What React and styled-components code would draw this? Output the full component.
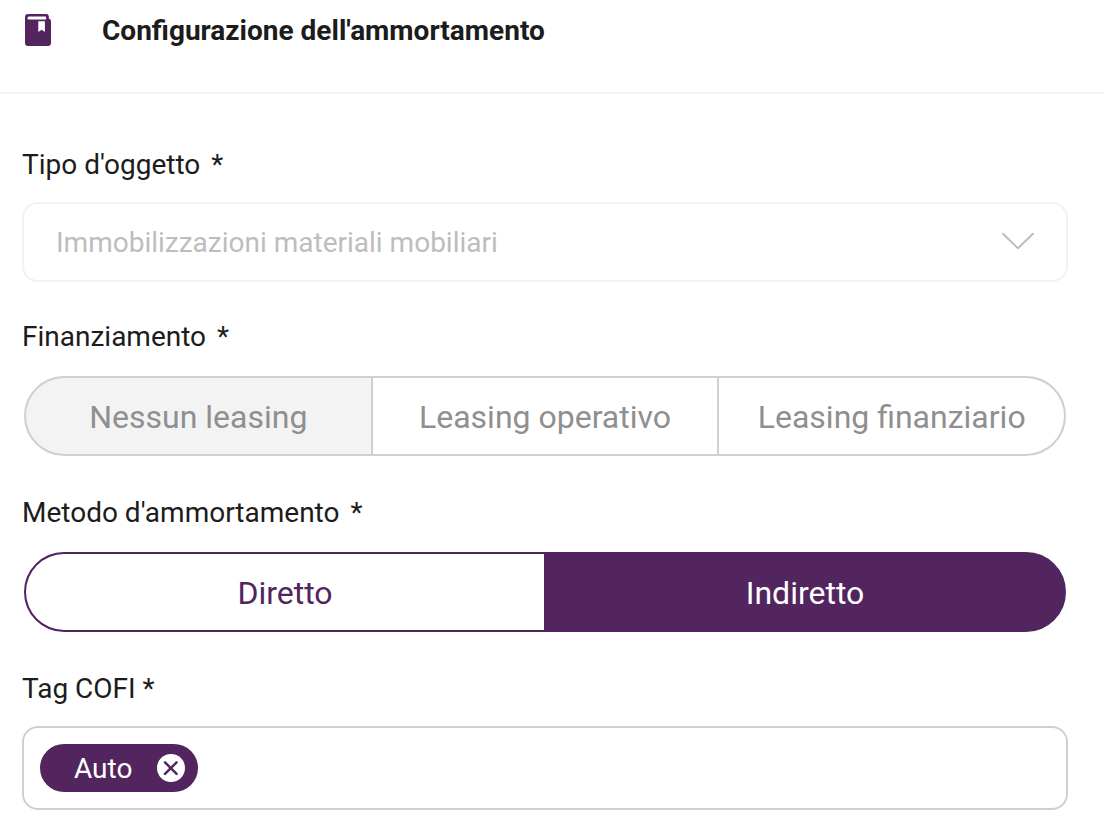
import React, { useState } from "react";
import styled, { createGlobalStyle } from "styled-components";

const color = {
  brand: "#52255f",
  text: "#1c1c1c",
  line: "#d0d0d0",
  faintLine: "#f2f2f2",
  muted: "#8f8f8f",
  disabled: "#bdbdbd",
  fill: "#f3f3f3",
};

const GlobalStyle = createGlobalStyle`
  *, *::before, *::after { box-sizing: border-box; }
  body {
    margin: 0;
    background: #fff;
    color: ${color.text};
    font: 400 28px/34px Roboto, "Liberation Sans", sans-serif;
  }
  button, input, select { font: inherit; }
`;

const Header = styled.header`
  display: flex;
  align-items: flex-start;
  gap: 50px;
  padding: 14px 24px 44px;
  border-bottom: 2px solid ${color.faintLine};
`;

const BookIcon = styled.svg`
  flex: none;
  width: 28px;
  height: 32px;
`;

const Title = styled.h1`
  margin: 0;
  font-size: 28px;
  line-height: 34px;
  font-weight: 700;
`;

const Form = styled.form`
  display: flex;
  flex-direction: column;
  gap: 38px;
  padding: 54px 36px 28px 22px;
`;

const Field = styled.div`
  display: flex;
  flex-direction: column;
  gap: 20px;
`;

const Label = styled.label`
  display: block;
`;

const Star = styled.span`
  margin-left: 4px;
`;

const SelectBox = styled.div`
  display: grid;
  align-items: center;
  > * { grid-area: 1 / 1; }
`;

const Select = styled.select`
  appearance: none;
  width: 100%;
  height: 80px;
  padding: 2px 80px 0 32px;
  border: 2px solid ${color.faintLine};
  border-radius: 16px;
  background: #fff;
  color: ${color.disabled};
  opacity: 1;
`;

const Chevron = styled.svg`
  justify-self: end;
  width: 34px;
  height: 20px;
  margin-right: 33px;
  pointer-events: none;
`;

const Segments = styled.div`
  display: flex;
  gap: 2px;
  height: 80px;
  margin: 2px;
  border: 2px solid ${(p) => (p.$disabled ? color.line : color.brand)};
  border-radius: 40px;
  background: ${(p) => (p.$disabled ? color.line : color.brand)};
  overflow: hidden;
`;

const Segment = styled.button`
  flex: 1 1 0;
  padding: 2px 0 0;
  border: 0;
  font-size: 32px;
  line-height: 40px;
  background: ${(p) => (p.$active ? color.brand : "#fff")};
  color: ${(p) => (p.$active ? "#fff" : color.brand)};
  &:disabled {
    background: ${(p) => (p.$active ? color.fill : "#fff")};
    color: ${color.muted};
  }
`;

const TagBox = styled.div`
  display: flex;
  align-items: center;
  gap: 16px;
  padding: 16px;
  border: 2px solid ${color.line};
  border-radius: 16px;
`;

const Tag = styled.span`
  display: flex;
  align-items: center;
  gap: 25px;
  height: 48px;
  padding: 0 13px 0 34px;
  border-radius: 24px;
  background: ${color.brand};
  color: #fff;
`;

const TagName = styled.span`
  padding-top: 2px;
`;

const RemoveButton = styled.button`
  display: flex;
  width: 28px;
  height: 28px;
  padding: 0;
  border: 0;
  border-radius: 50%;
  background: #fff;
  color: ${color.brand};
`;

const TagInput = styled.input`
  flex: 1;
  min-width: 0;
  height: 40px;
  padding: 0;
  border: 0;
  outline: 0;
  background: transparent;
`;

function SegmentField({ id, label, options, initial, disabled }) {
  const [value, setValue] = useState(initial);
  return (
    <Field>
      <Label as="div" id={id}>
        {label} <Star>*</Star>
      </Label>
      <Segments role="group" aria-labelledby={id} $disabled={disabled}>
        {options.map((option) => (
          <Segment
            key={option}
            type="button"
            disabled={disabled}
            aria-pressed={option === value}
            $active={option === value}
            onClick={() => setValue(option)}
          >
            {option}
          </Segment>
        ))}
      </Segments>
    </Field>
  );
}

export default function App() {
  const [tags, setTags] = useState(["Auto"]);
  return (
    <>
      <GlobalStyle />
      <Header>
        <BookIcon viewBox="0 0 28 32" aria-hidden="true">
          <path
            fill={color.brand}
            fillRule="evenodd"
            d="M4 0H22.4A2.4 2.4 0 0 1 24.8 2.4V4.4A3 3 0 0 1 27 7.4V29A3 3 0 0 1 24 32H4A3 3 0 0 1 1 29V3A3 3 0 0 1 4 0ZM5 2.4A1.5 1.5 0 0 0 5 5.5H21.6A0.5 0.5 0 0 0 22.1 5V2.9A0.5 0.5 0 0 0 21.6 2.4ZM14.3 7.3V18L17.6 15.7L20.9 18V7.3Z"
          />
        </BookIcon>
        <Title>Configurazione dell'ammortamento</Title>
      </Header>
      <Form onSubmit={(e) => e.preventDefault()}>
        <Field>
          <Label htmlFor="object-type">
            Tipo d'oggetto <Star>*</Star>
          </Label>
          <SelectBox>
            <Select id="object-type" disabled>
              <option>Immobilizzazioni materiali mobiliari</option>
            </Select>
            <Chevron viewBox="0 0 34 20" aria-hidden="true">
              <path d="M2 1.7L17 16.3L32 1.7" fill="none" stroke={color.disabled} strokeWidth="2" strokeLinecap="round" strokeLinejoin="round" />
            </Chevron>
          </SelectBox>
        </Field>
        <SegmentField
          id="financing"
          label="Finanziamento"
          options={["Nessun leasing", "Leasing operativo", "Leasing finanziario"]}
          initial="Nessun leasing"
          disabled
        />
        <SegmentField
          id="method"
          label="Metodo d'ammortamento"
          options={["Diretto", "Indiretto"]}
          initial="Indiretto"
        />
        <Field>
          <Label htmlFor="cofi-tag">Tag COFI *</Label>
          <TagBox>
            {tags.map((tag) => (
              <Tag key={tag}>
                <TagName>{tag}</TagName>
                <RemoveButton
                  type="button"
                  aria-label={`Rimuovi ${tag}`}
                  onClick={() => setTags(tags.filter((t) => t !== tag))}
                >
                  <svg width="28" height="28" viewBox="0 0 28 28" aria-hidden="true">
                    <path d="M8 8.3L19.6 19.9M19.6 8.3L8 19.9" stroke="currentColor" strokeWidth="2.4" strokeLinecap="round" />
                  </svg>
                </RemoveButton>
              </Tag>
            ))}
            <TagInput id="cofi-tag" type="text" />
          </TagBox>
        </Field>
      </Form>
    </>
  );
}
